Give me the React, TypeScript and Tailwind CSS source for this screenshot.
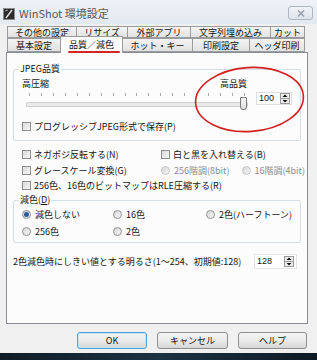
import React from "react";

const jp = "font-['Noto_Sans_CJK_JP','Noto_Sans',sans-serif]";

const Check = ({ label }: { label: React.ReactNode }) => (
  <div className="flex items-center gap-[3px]">
    <span className="h-[9px] w-[9px] shrink-0 border border-[#8e8f8f] bg-linear-to-br from-[#d9d9d9] to-[#f7f7f7]" />
    <span>{label}</span>
  </div>
);

const Radio = ({
  label,
  checked = false,
  disabled = false,
}: {
  label: React.ReactNode;
  checked?: boolean;
  disabled?: boolean;
}) => (
  <div className={`flex items-center gap-[4px] ${disabled ? "text-[#8d8d8d]" : ""}`}>
    <span
      className={`flex h-[9px] w-[9px] shrink-0 items-center justify-center rounded-full border ${
        disabled ? "border-[#c4c4c4]" : "border-[#8e8f8f]"
      } bg-linear-to-br from-[#d6d6d6] to-[#f8f8f8]`}
    >
      {checked && <span className="h-[5px] w-[5px] rounded-full bg-[#2a5aa0]" />}
    </span>
    <span>{label}</span>
  </div>
);

const SpinArrows = () => (
  <svg width="10" height="11" viewBox="0 0 10 11">
    <rect x="0.5" y="0.5" width="9" height="10" fill="#eeeeee" stroke="#9a9a9a" />
    <line x1="1" y1="5.5" x2="9" y2="5.5" stroke="#9a9a9a" />
    <path d="M2.5 4 L5 1.5 L7.5 4 Z" fill="#111" />
    <path d="M2.5 7 L5 9.5 L7.5 7 Z" fill="#111" />
  </svg>
);

const Tab = ({ label, w }: { label: string; w: string }) => (
  <div
    className={`flex h-full ${w} items-center justify-center border border-r-0 border-[#9a9b9c] bg-linear-to-b from-[#f4f4f4] to-[#e2e2e2] last:border-r`}
  >
    {label}
  </div>
);

const Btn = ({ label, w, focus = false }: { label: string; w: string; focus?: boolean }) => (
  <div
    className={`flex h-[17px] ${w} items-center justify-center rounded-[3px] border ${
      focus ? "border-[#4fa3d6] shadow-[inset_0_0_0_1px_#bfe3f7]" : "border-[#8f8f8f]"
    } bg-linear-to-b from-[#f3f3f3] via-[#ebebeb] to-[#d6d6d6]`}
  >
    {label}
  </div>
);

export default function App() {
  return (
    <div className={`relative flex h-[360px] w-[317px] flex-col overflow-hidden bg-[#f0f0f0] text-[9px] leading-[11px] text-[#151515] ${jp}`}>
      {/* title bar */}
      <div className="flex h-[24px] shrink-0 items-center bg-linear-to-b from-[#eef2f7] to-[#e3e9f0] pl-[3px] pr-[4px]">
        <svg width="12" height="12" viewBox="0 0 12 12" className="mt-[3px]">
          <rect x="0.5" y="0.5" width="11" height="11" fill="#2b2b2b" stroke="#8a8a8a" />
          <path d="M3 10 L9 2" stroke="#d8d8d8" strokeWidth="1.6" />
          <path d="M2 3 L5 2" stroke="#9a9a9a" strokeWidth="1" />
        </svg>
        <span className="ml-[4px] mt-[3px] text-[11px] text-[#555b62]">WinShot 環境設定</span>
        <div className="ml-auto mt-[2px] flex h-[14px] w-[25px] items-center justify-center rounded-[3px] border border-[#aeb6c0] bg-linear-to-b from-[#f0f3f7] to-[#dde3ea]">
          <svg width="8" height="7" viewBox="0 0 8 7">
            <path d="M1 0.5 L7 6.5 M7 0.5 L1 6.5" stroke="#9aa3ad" strokeWidth="1.6" />
          </svg>
        </div>
      </div>

      {/* tabs */}
      <div className="mt-[2px] ml-[7px] flex h-[12px] w-[298px]">
        <Tab label="その他の設定" w="w-[69px]" />
        <Tab label="リサイズ" w="w-[51px]" />
        <Tab label="外部アプリ" w="w-[63px]" />
        <Tab label="文字列埋め込み" w="w-[80px]" />
        <Tab label="カット" w="w-[35px]" />
      </div>
      <div className="relative z-10 ml-[7px] flex h-[14px] w-[298px] items-end">
        <Tab label="基本設定" w="w-[53px]" />
        <div className="relative -mb-px flex h-[17px] w-[63px] shrink-0 items-center justify-center border border-b-0 border-[#9a9b9c] bg-[#fcfcfc] pb-[2px]">
          品質／減色
          <span className="absolute bottom-[0px] left-[7px] h-[2px] w-[52px] rounded-full bg-[#d42424]" />
        </div>
        <div className="flex h-full w-[69px] items-center justify-center border border-l-0 border-r-0 border-[#9a9b9c] bg-linear-to-b from-[#f4f4f4] to-[#e2e2e2]">
          ホット・キー
        </div>
        <Tab label="印刷設定" w="w-[57px]" />
        <Tab label="ヘッダ印刷" w="w-[56px]" />
      </div>

      {/* panel */}
      <div className="ml-[6px] flex h-[272px] w-[302px] shrink-0 flex-col border border-[#898c95] bg-[#fcfcfc]">
        <fieldset className="mx-[6px] mt-[10px] rounded-[2px] border border-[#d5dfe5] px-0 pb-[8px]">
          <legend className="ml-[5px] px-[1px] leading-[12px]">JPEG品質</legend>
          <div className="flex h-[16px] items-center pl-[8px]">
            <span>高圧縮</span>
            <span className="ml-[171px]">高品質</span>
          </div>
          <div className="flex h-[21px] items-start">
            <div className="relative ml-[12px] h-[20px] w-[222px]">
              <div className="mt-[2px] flex justify-between px-[3px]">
                {Array.from({ length: 19 }).map((_, i) => (
                  <span key={i} className="h-[3px] w-px bg-[#a8a8a8]" />
                ))}
              </div>
              <div className="mt-[6px] h-[5px] w-full rounded-[1px] border border-[#d0d0d0] bg-[#e9ebeb]" />
              <span className="absolute left-[214px] top-[6px] h-[13px] w-[7px] rounded-b-[3px] rounded-t-[1px] border border-[#7a7a7a] bg-linear-to-b from-[#fbfbfb] to-[#dcdcdc]" />
            </div>
            <div className="ml-[8px] mt-[1px] flex h-[13px] w-[36px] items-center border border-[#dcdee1] bg-white pr-[1px]">
              <span className="flex-1 pl-[2px] font-['Liberation_Sans',sans-serif] text-[9px]">100</span>
              <SpinArrows />
            </div>
          </div>
          <div className="mt-[8px] flex h-[12px] items-center pl-[8px]">
            <Check label="プログレッシブJPEG形式で保存(P)" />
          </div>
        </fieldset>

        <div className="mt-[6px] grid grid-cols-[139px_1fr] pl-[15px]">
          <div className="flex h-[15px] items-center">
            <Check label="ネガポジ反転する(N)" />
          </div>
          <div className="flex h-[15px] items-center">
            <Check label="白と黒を入れ替える(B)" />
          </div>
          <div className="flex h-[16px] items-center">
            <Check label="グレースケール変換(G)" />
          </div>
          <div className="flex h-[16px] items-center gap-[12px]">
            <Radio label="256階調(8bit)" disabled />
            <Radio label="16階調(4bit)" disabled />
          </div>
          <div className="col-span-2 flex h-[15px] items-center">
            <Check label="256色、16色のビットマップはRLE圧縮する(R)" />
          </div>
        </div>

        <fieldset className="mx-[6px] mt-[1px] rounded-[2px] border border-[#d5dfe5] px-0 pb-[2px]">
          <legend className="ml-[5px] px-[1px] leading-[12px]">
            減色(<span className="underline">D</span>)
          </legend>
          <div className="grid grid-cols-[91px_93px_1fr] pl-[8px]">
            <div className="flex h-[17px] items-center">
              <Radio label="減色しない" checked />
            </div>
            <div className="flex h-[17px] items-center">
              <Radio label="16色" />
            </div>
            <div className="flex h-[17px] items-center">
              <Radio label="2色(ハーフトーン)" />
            </div>
            <div className="flex h-[17px] items-center">
              <Radio label="256色" />
            </div>
            <div className="flex h-[17px] items-center">
              <Radio label="2色" />
            </div>
          </div>
        </fieldset>

        <div className="mt-[11px] flex h-[15px] items-center pl-[6px]">
          <span>2色減色時にしきい値とする明るさ(1～254、初期値:128)</span>
          <div className="ml-auto mr-[10px] flex h-[15px] w-[43px] items-center border border-[#e2e4e7] bg-white pr-[2px]">
            <span className="flex-1 pl-[2px] font-['Liberation_Sans',sans-serif] text-[9px]">128</span>
            <SpinArrows />
          </div>
        </div>
      </div>

      {/* buttons */}
      <div className="mt-[8px] flex gap-[10px] pl-[77px]">
        <Btn label="OK" w="w-[70px]" focus />
        <Btn label="キャンセル" w="w-[71px]" />
        <Btn label="ヘルプ" w="w-[69px]" />
      </div>

      <div className="mt-auto h-[7px] bg-linear-to-r from-[#0f1c26] via-[#1c3344] to-[#0e1a24]" />

      {/* red annotation ellipse */}
      <svg className="pointer-events-none absolute left-0 top-0" width="317" height="360" viewBox="0 0 317 360">
        <ellipse cx="249.5" cy="99.5" rx="54" ry="32" fill="none" stroke="#d21f1f" strokeWidth="1.6" transform="rotate(-4 249.5 99.5)" />
      </svg>
    </div>
  );
}
